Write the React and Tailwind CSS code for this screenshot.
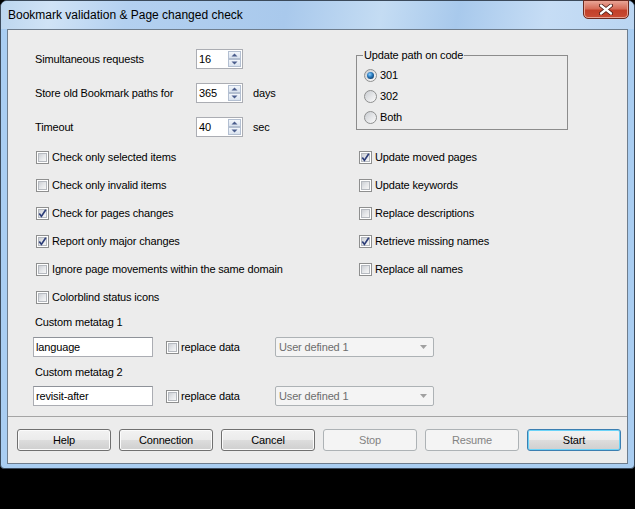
import { useState } from "react";

const font = { fontFamily: '"Liberation Sans", Arial, sans-serif' };

function CheckBox({ checked }) {
    return (
        <span className="relative w-[13px] h-[13px] shrink-0 border border-[#8e8f8f] bg-white p-[1px]">
            <span className="block w-full h-full border border-[#b5b9bf] bg-[linear-gradient(135deg,#cdd0d5_0%,#e4e6e9_50%,#f6f6f6_100%)]" />
            {checked && (
                <svg className="absolute left-0 top-0" width="11" height="11" viewBox="0 0 11 11">
                    <path d="M2.3 5.6 L4.4 8.4 L8.8 1.8" fill="none" stroke="#2c3d78" strokeWidth="1.7" />
                </svg>
            )}
        </span>
    );
}

function Radio({ checked }) {
    return (
        <span className="flex items-center justify-center w-[13px] h-[13px] shrink-0 rounded-full border border-[#8e8f8f] bg-[linear-gradient(135deg,#c9ccd1_0%,#e6e7e9_55%,#fbfbfb_100%)]">
            {checked && (
                <span className="w-[7px] h-[7px] rounded-full bg-[radial-gradient(circle_at_40%_35%,#8fd0ff_0%,#2a7cc0_40%,#0b355f_85%)]" />
            )}
        </span>
    );
}

function Spin({ value }) {
    return (
        <div className="flex w-[47px] h-[20px] border border-[#abadb3] bg-white">
            <span className="flex-1 pl-[2px] leading-[18px]">{value}</span>
            <div className="flex flex-col pt-[1px] pr-[1px]">
                {["up", "down"].map((d) => (
                    <span
                        key={d}
                        className="flex items-center justify-center w-[13px] h-[8px] border border-[#b3bfd1] bg-[linear-gradient(#f2f6fb,#d9e2ee)]"
                    >
                        <svg width="7" height="4" viewBox="0 0 7 4">
                            <path d={d === "up" ? "M0.5 3.5 L3.5 0.5 L6.5 3.5 Z" : "M0.5 0.5 L3.5 3.5 L6.5 0.5 Z"} fill="#4a5d8c" />
                        </svg>
                    </span>
                ))}
            </div>
        </div>
    );
}

function Btn({ children, disabled, primary }) {
    let cls =
        "w-[94px] h-[22px] rounded-[3px] border flex items-center justify-center text-[11px] ";
    if (disabled) {
        cls += "border-[#adb2b5] bg-[#f4f4f4] text-[#838383]";
    } else if (primary) {
        cls +=
            "border-[#3c7fb1] text-black shadow-[inset_0_0_0_1px_#6ad3f8] bg-[linear-gradient(#f2f2f2_0%,#ebebeb_50%,#dddddd_50%,#cfcfcf_100%)]";
    } else {
        cls +=
            "border-[#707070] text-black shadow-[inset_0_0_0_1px_#fbfbfb] bg-[linear-gradient(#f2f2f2_0%,#ebebeb_50%,#dddddd_50%,#cfcfcf_100%)]";
    }
    return <div className={cls}>{children}</div>;
}

function MetaRow({ value }) {
    return (
        <div className="flex items-center h-[20px]">
            <div className="w-[120px] h-[20px] border border-[#abadb3] border-t-[#8e9299] bg-white pl-[2px] leading-[18px]">
                {value}
            </div>
            <div className="ml-[13px] w-[109px] flex items-center gap-[2px]">
                <CheckBox />
                <span>replace data</span>
            </div>
            <div className="w-[159px] h-[20px] rounded-[2px] border border-[#adb2b5] bg-[#f4f4f4] flex items-center pl-[3px] pr-[6px] text-[#6d6d6d]">
                <span className="flex-1">User defined 1</span>
                <svg width="7" height="4" viewBox="0 0 7 4">
                    <path d="M0 0 L7 0 L3.5 4 Z" fill="#a0a0a0" />
                </svg>
            </div>
        </div>
    );
}

export default function App() {
    const [left] = useState([
        ["Check only selected items", false],
        ["Check only invalid items", false],
        ["Check for pages changes", true],
        ["Report only major changes", true],
        ["Ignore page movements within the same domain", false],
        ["Colorblind status icons", false],
    ]);
    const right = [
        ["Update moved pages", true],
        ["Update keywords", false],
        ["Replace descriptions", false],
        ["Retrieve missing names", true],
        ["Replace all names", false],
    ];

    return (
        <div className="w-[635px] h-[509px] bg-black text-[11px] text-black" style={font}>
            {/* window frame */}
            <div className="w-[635px] h-[469px] flex flex-col rounded-t-[7px] rounded-b-[4px] border border-[#3b4a5b] bg-[#a9cdf1]">
                {/* title bar */}
                <div className="flex items-center h-[28px] rounded-t-[6px] bg-[linear-gradient(100deg,#bcd6ef_0%,#d0e3f6_8%,#b3d0f0_20%,#a9c9ec_45%,#c4dcf3_60%,#a8c9ec_72%,#c6ddf5_86%,#bad5f2_100%)]">
                    <span className="pl-[7px] text-[12px] flex-1">Bookmark validation &amp; Page changed check</span>
                    <div className="self-start -mt-[1px] mr-[5px] w-[46px] h-[19px] rounded-b-[5px] border border-[#6b2a20] shadow-[inset_0_0_0_1px_#e8a292] bg-[linear-gradient(#e9a597_0%,#d66c58_45%,#c2402a_55%,#c94c34_100%)] flex items-center justify-center">
                        <svg width="14" height="11" viewBox="0 0 14 11">
                            <path d="M2 1.5 L12 9.5 M12 1.5 L2 9.5" stroke="#4a1a12" strokeWidth="4" strokeLinecap="round" />
                            <path d="M2 1.5 L12 9.5 M12 1.5 L2 9.5" stroke="#ffffff" strokeWidth="2.3" strokeLinecap="round" />
                        </svg>
                    </div>
                </div>

                {/* client area */}
                <div className="mx-[6px] h-[435px] border border-[#6e7d8d] bg-[#ececec] flex flex-col tracking-[-0.15px]">
                    {/* numeric settings + group box */}
                    <div className="flex pt-[19px] h-[107px]">
                        <div className="w-[348px] pl-[27px] flex flex-col gap-[14px]">
                            <div className="flex items-center h-[20px]">
                                <span className="w-[161px]">Simultaneous requests</span>
                                <Spin value="16" />
                            </div>
                            <div className="flex items-center h-[20px]">
                                <span className="w-[161px]">Store old Bookmark paths for</span>
                                <Spin value="365" />
                                <span className="ml-[10px]">days</span>
                            </div>
                            <div className="flex items-center h-[20px]">
                                <span className="w-[161px]">Timeout</span>
                                <Spin value="40" />
                                <span className="ml-[10px]">sec</span>
                            </div>
                        </div>
                        <div className="relative mt-[6px] w-[212px] h-[75px] border border-[#8c8c8c] pt-[9px] pl-[7px]">
                            <span className="absolute left-[6px] -top-[7px] px-[1px] bg-[#ececec] leading-[13px]">
                                Update path on code
                            </span>
                            {[["301", true], ["302", false], ["Both", false]].map(([t, c]) => (
                                <div key={t} className="flex items-center gap-[3px] h-[21px]">
                                    <Radio checked={c} />
                                    <span>{t}</span>
                                </div>
                            ))}
                        </div>
                    </div>

                    {/* checkbox columns */}
                    <div className="flex mt-[6px]">
                        <div className="w-[351px] pl-[28px] flex flex-col">
                            {left.map(([t, c]) => (
                                <div key={t} className="flex items-center gap-[3px] h-[28px]">
                                    <CheckBox checked={c} />
                                    <span>{t}</span>
                                </div>
                            ))}
                        </div>
                        <div className="flex flex-col">
                            {right.map(([t, c]) => (
                                <div key={t} className="flex items-center gap-[3px] h-[28px]">
                                    <CheckBox checked={c} />
                                    <span>{t}</span>
                                </div>
                            ))}
                        </div>
                    </div>

                    {/* custom metatags */}
                    <div className="pl-[25px] flex flex-col">
                        <div className="mt-[1px] h-[20px] flex items-center pl-[2px]">Custom metatag 1</div>
                        <div className="mt-[5px]">
                            <MetaRow value="language" />
                        </div>
                        <div className="mt-[5px] h-[20px] flex items-center pl-[2px]">Custom metatag 2</div>
                        <div className="mt-[4px]">
                            <MetaRow value="revisit-after" />
                        </div>
                    </div>

                    <div className="mt-[10px] h-[1px] bg-[#a5a5a5]" />

                    {/* buttons */}
                    <div className="mt-[12px] pl-[9px] flex gap-[8px]">
                        <Btn>Help</Btn>
                        <Btn>Connection</Btn>
                        <Btn>Cancel</Btn>
                        <Btn disabled>Stop</Btn>
                        <Btn disabled>Resume</Btn>
                        <Btn primary>Start</Btn>
                    </div>
                </div>
            </div>
        </div>
    );
}
